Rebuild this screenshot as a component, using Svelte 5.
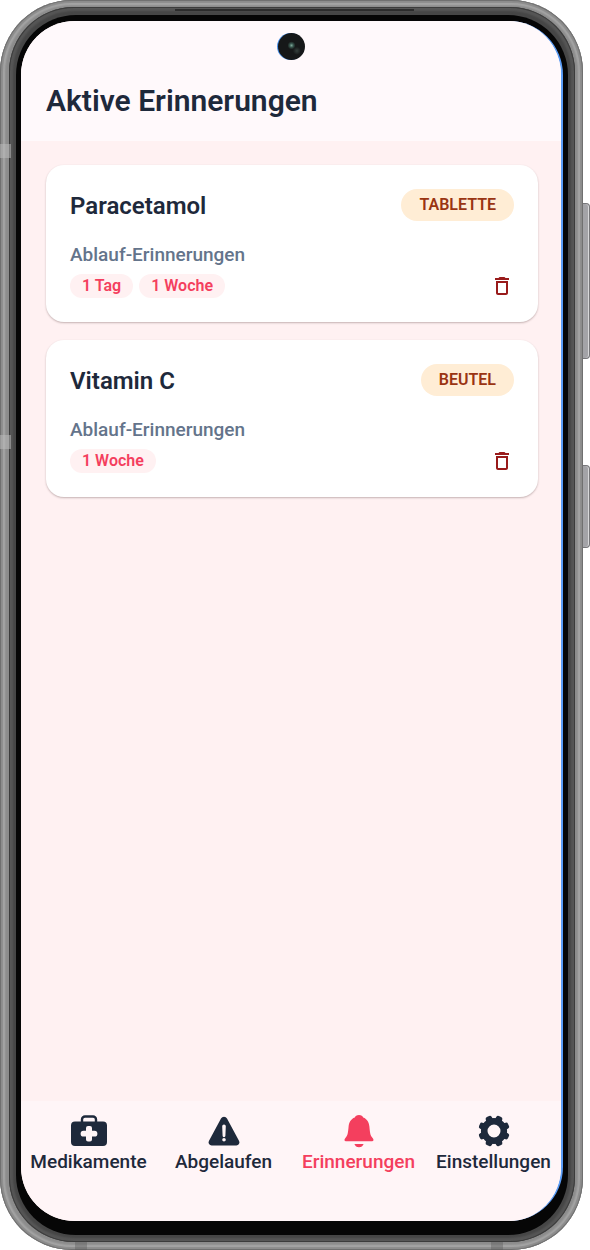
<script>
  const reminders = [
    { name: 'Paracetamol', form: 'Tablette', periods: ['1 Tag', '1 Woche'] },
    { name: 'Vitamin C', form: 'Beutel', periods: ['1 Woche'] }
  ];

  // Eight rounded teeth around a round hub, centred on 18,18.
  const teeth = [22.5, 67.5, 112.5, 157.5, 202.5, 247.5, 292.5, 337.5];
</script>

<div class="stage">
  <div class="phone">
    <span class="key volume"></span>
    <span class="key power"></span>
    <span class="band left-top"></span>
    <span class="band left-mid"></span>
    <span class="band foot-left"></span>
    <span class="band foot-right"></span>
    <span class="speaker"></span>
    <div class="rim">
      <div class="bezel">
        <div class="screen">
          <span class="camera"></span>
          <header>
            <h1>Aktive Erinnerungen</h1>
          </header>

          <main>
            {#each reminders as item}
              <article>
                <div class="row top">
                  <h2>{item.name}</h2>
                  <span class="badge">{item.form}</span>
                </div>
                <h3>Ablauf-Erinnerungen</h3>
                <div class="row">
                  <ul>
                    {#each item.periods as period}
                      <li>{period}</li>
                    {/each}
                  </ul>
                  <button class="delete" aria-label="Löschen">
                    <svg viewBox="0 0 24 24" width="24" height="24">
                      <path d="M6 19c0 1.100.9 2 2 2h8c1.100 0 2-.9 2-2V7H6v12zM8 9h8v10H8V9zm7.500-5l-1-1h-5l-1 1H5v2h14V4z" />
                    </svg>
                  </button>
                </div>
              </article>
            {/each}
          </main>

          <nav>
            <a href="#medikamente">
              <svg viewBox="0 0 36 36" width="36" height="36">
                <path d="M11 9V6.500a3 3 0 0 1 3-3h8a3 3 0 0 1 3 3V9" fill="none" stroke="currentColor" stroke-width="2.400" />
                <path fill-rule="evenodd" d="M4 8.500h28a4 4 0 0 1 4 4V29a4 4 0 0 1-4 4H4a4 4 0 0 1-4-4V12.500a4 4 0 0 1 4-4zM17 13a2 2 0 0 0-2 2v2.800H12.500a2.900 2.900 0 0 0 0 5.800H15v2.800a2 2 0 0 0 2 2h2a2 2 0 0 0 2-2v-2.800h2.500a2.900 2.900 0 0 0 0-5.800H21V15a2 2 0 0 0-2-2z" />
              </svg>
              <span>Medikamente</span>
            </a>
            <a href="#abgelaufen">
              <svg viewBox="0 0 36 36" width="36" height="36">
                <path fill-rule="evenodd" d="M15 5.500a3.400 3.400 0 0 1 6 0L33.100 28a3.100 3.100 0 0 1-2.700 4.500H5.600A3.100 3.100 0 0 1 2.900 28zM16.200 13.200l.4 9.600a1.400 1.400 0 0 0 2.800 0l.4-9.600a1.800 1.800 0 0 0-3.600 0zM18 25a1.800 1.800 0 1 0 0 3.600a1.800 1.800 0 0 0 0-3.600z" />
              </svg>
              <span>Abgelaufen</span>
            </a>
            <a class="active" href="#erinnerungen" aria-current="page">
              <svg viewBox="0 0 36 36" width="36" height="36">
                <path d="M18 2c-2.300 0-3.700 1.100-4.200 2.600C9.800 6 8 9.500 7.600 13.500c-.6 6.300-.7 8.500-3 11.200C2.800 26.900 3.300 28.300 5.500 28.300h25c2.200 0 2.700-1.400.9-3.600-2.300-2.700-2.400-4.900-3-11.200-.4-4-2.200-7.500-6.200-8.900C21.700 3.100 20.300 2 18 2zM13.400 30.900h9.200c-.6 2-2.400 3.300-4.600 3.300s-4-1.300-4.600-3.300z" />
              </svg>
              <span>Erinnerungen</span>
            </a>
            <a href="#einstellungen">
              <svg viewBox="0 0 36 36" width="36" height="36">
                {#each teeth as angle}
                  <path d="M13.800 10l1-6a2 2 0 0 1 2-1.700h2.400a2 2 0 0 1 2 1.700l1 6z" transform="rotate({angle} 18 18)" />
                {/each}
                <circle cx="18" cy="18" r="9.800" fill="none" stroke="currentColor" stroke-width="6.600" />
              </svg>
              <span>Einstellungen</span>
            </a>
          </nav>
        </div>
      </div>
    </div>
  </div>
</div>

<style>
  :global(body) {
    margin: 0;
    background: #fff;
  }

  .stage {
    box-sizing: border-box;
    display: flex;
    min-height: 100vh;
    padding-right: 7px;
    font-family: Roboto, sans-serif;
    color: #1e293b;
  }

  .phone {
    position: relative;
    flex: 1;
    display: flex;
    padding: 7px 8px 8px 9px;
    border-radius: 72px;
    background: #8c8c8c;
    box-shadow:
      inset 0 0 0 1px #707070,
      inset 0 0 1px 3px #8c8c8c,
      inset 0 0 2px 5px #a8a8a8;
  }

  .rim {
    flex: 1;
    display: flex;
    padding: 8px 7px 7px 7px;
    border-radius: 65px;
    background: #464646;
    box-shadow: inset 0 0 0 1px #3c3c3c, inset 0 0 2px 4px #565656;
  }

  .bezel {
    flex: 1;
    display: flex;
    padding: 6px 5px 14px 5px;
    border-radius: 60px;
    background: #060606;
  }

  .screen {
    position: relative;
    flex: 1;
    display: flex;
    flex-direction: column;
    overflow: hidden;
    border-right: 2px solid #5b9cf5;
    border-radius: 54px;
    background: #fff1f2;
  }

  .key {
    position: absolute;
    right: -7px;
    width: 7px;
    box-sizing: border-box;
    border: 1px solid #77777a;
    border-left: 0;
    border-radius: 0 4px 4px 0;
    background: #a3a3a7;
    box-shadow: inset -1px 0 #d8d8da;
  }

  .volume {
    top: 203px;
    height: 156px;
  }

  .power {
    top: 465px;
    height: 83px;
  }

  .band {
    position: absolute;
    background: rgba(190, 190, 190, 0.5);
  }

  .left-top,
  .left-mid {
    left: 0;
    width: 11px;
    height: 14px;
  }

  .left-top {
    top: 144px;
  }

  .left-mid {
    top: 435px;
  }

  .foot-left,
  .foot-right {
    bottom: 0;
    width: 12px;
    height: 8px;
    background: rgba(90, 90, 90, 0.4);
  }

  .foot-left {
    left: 75px;
  }

  .foot-right {
    right: 80px;
  }

  .speaker {
    position: absolute;
    top: 9px;
    left: 30%;
    right: 29%;
    height: 2px;
    background: #2c2c2c;
  }

  .camera {
    position: absolute;
    top: 12px;
    left: 50%;
    width: 27px;
    height: 27px;
    margin-left: -13px;
    border-radius: 50%;
    background:
      radial-gradient(circle at 50% 46%, #7fa99b 0, #35524a 2px, transparent 4px),
      radial-gradient(circle at 70% 66%, #35403d 0, transparent 4px),
      #161819;
    box-shadow: -1px 0 #4a90e8;
  }

  header {
    padding: 60px 25px 20px;
    background: #fff9fb;
  }

  h1,
  h2,
  h3 {
    margin: 0;
  }

  h1 {
    font-size: 30px;
    line-height: 40px;
    font-weight: 600;
  }

  main {
    flex: 1;
    display: flex;
    flex-direction: column;
    gap: 18px;
    padding: 24px 23px 24px 25px;
  }

  article {
    padding: 24px;
    border-radius: 18px;
    background: #fff;
    box-shadow: 0 1px 2px rgba(60, 30, 30, 0.3);
  }

  .row {
    display: flex;
    align-items: center;
    justify-content: space-between;
  }

  .top {
    align-items: flex-start;
  }

  h2 {
    font-size: 24px;
    line-height: 35px;
    font-weight: 600;
  }

  .badge {
    padding: 0 18px;
    border-radius: 16px;
    background: #ffedd5;
    color: #9a3412;
    font-size: 16px;
    line-height: 32px;
    font-weight: 600;
    text-transform: uppercase;
  }

  h3 {
    margin: 19px 0 7px;
    color: #64748b;
    font-size: 19px;
    line-height: 24px;
    font-weight: 500;
  }

  ul {
    display: flex;
    gap: 6px;
    margin: 0;
    padding: 0;
    list-style: none;
  }

  li {
    padding: 0 12px;
    border-radius: 12px;
    background: #fff1f2;
    color: #f43f5e;
    font-size: 16px;
    line-height: 24px;
    font-weight: 600;
  }

  .delete {
    display: flex;
    padding: 0;
    border: 0;
    background: none;
    color: #991b1b;
  }

  svg {
    display: block;
    fill: currentColor;
  }

  nav {
    display: grid;
    grid-template-columns: repeat(4, minmax(0, 1fr));
    padding: 12px 0 47px;
    background: #fff5f7;
  }

  nav a {
    display: flex;
    flex-direction: column;
    align-items: center;
    gap: 1px;
    color: #1e293b;
    font-size: 19px;
    line-height: 24px;
    font-weight: 500;
    text-decoration: none;
  }

  nav .active {
    color: #f43f5e;
  }
</style>
